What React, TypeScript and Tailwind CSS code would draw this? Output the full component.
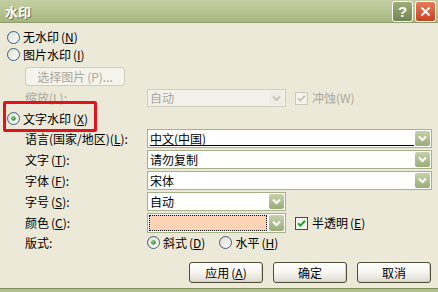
import React from "react";

// XP (olive) style "水印" dialog

function Acc({ t, k }: { t: string; k: string }) {
  return (
    <>
      {t}
      <span className="ml-[2px]">(</span>
      <span className="underline">{k}</span>)
    </>
  );
}

function Radio({ checked = false }: { checked?: boolean }) {
  return (
    <svg width="13" height="13" viewBox="0 0 13 13" className="shrink-0">
      <defs>
        <linearGradient id="rg" x1="0" y1="0" x2="1" y2="1">
          <stop offset="0" stopColor="#dcdbd2" />
          <stop offset="1" stopColor="#ffffff" />
        </linearGradient>
      </defs>
      <circle cx="6.5" cy="6.5" r="6" fill="url(#rg)" stroke="#3f5f86" strokeWidth="1" />
      {checked ? <circle cx="6.5" cy="6.5" r="2.3" fill="#3aa33a" /> : null}
      {checked ? <circle cx="6" cy="6" r="0.9" fill="#8fd48c" /> : null}
    </svg>
  );
}

function Check({ checked = false, disabled = false }: { checked?: boolean; disabled?: boolean }) {
  return (
    <svg width="13" height="13" viewBox="0 0 13 13" className="shrink-0">
      <rect
        x="0.5"
        y="0.5"
        width="12"
        height="12"
        fill={disabled ? "#f4f3ee" : "#f6f6f3"}
        stroke={disabled ? "#cac8bb" : "#2a5079"}
      />
      {checked ? (
        <path
          d="M3 6.2 L5.3 8.6 L10 3.8"
          fill="none"
          stroke={disabled ? "#cac8bb" : "#21a121"}
          strokeWidth="2"
        />
      ) : null}
    </svg>
  );
}

function DropBtn({ disabled = false }: { disabled?: boolean }) {
  return (
    <div
      className={
        disabled
          ? "m-[1px] flex w-[15px] shrink-0 items-center justify-center rounded-[2px] bg-[#eeede6]"
          : "m-[1px] flex w-[15px] shrink-0 items-center justify-center rounded-[2px] bg-gradient-to-b from-[#c7d1ab] to-[#9aab78]"
      }
    >
      <svg width="9" height="7" viewBox="0 0 9 7">
        <path
          d="M1 1.5 L4.5 5 L8 1.5"
          fill="none"
          stroke={disabled ? "#c9c7b9" : "#ffffff"}
          strokeWidth="2"
        />
      </svg>
    </div>
  );
}

function Combo({
  value,
  className = "",
  disabled = false,
  peach = false,
  doubleLine = false,
}: {
  value?: string;
  className?: string;
  disabled?: boolean;
  peach?: boolean;
  doubleLine?: boolean;
}) {
  return (
    <div
      className={
        "flex h-full border " +
        (disabled ? "border-[#cfcdbf] bg-[#f3f2ea] " : "border-[#a7b189] bg-white ") +
        className
      }
    >
      {peach ? (
        <div className="m-[1px] flex-1 border border-dotted border-black bg-[#fcd3b5]" />
      ) : (
        <div className="flex flex-1 items-center overflow-hidden pl-[2px]">
          {doubleLine ? (
            <div className="mt-[2px] w-full border-b border-black pb-[1px]">
              <div className="border-b border-black leading-[13px]">{value}</div>
            </div>
          ) : (
            <span className={disabled ? "text-[#aca899]" : "text-black"}>{value}</span>
          )}
        </div>
      )}
      <DropBtn disabled={disabled} />
    </div>
  );
}

function PushBtn({ children }: { children: React.ReactNode }) {
  return (
    <div className="flex h-full w-[74px] items-center justify-center rounded-[3px] border border-[#50503a] bg-gradient-to-b from-[#ffffff] via-[#f5f4ef] to-[#dedbcf] shadow-[inset_-1px_-1px_0_#d6d2c2]">
      {children}
    </div>
  );
}

function Row({
  label,
  children,
  className = "h-[19px]",
}: {
  label: React.ReactNode;
  children: React.ReactNode;
  className?: string;
}) {
  return (
    <div className={"flex items-center pl-[18px] " + className}>
      <div className="w-[122px] shrink-0">{label}</div>
      {children}
    </div>
  );
}

export default function App() {
  return (
    <div className="relative flex h-[292px] w-[438px] flex-col overflow-hidden bg-[#ece9d8] font-['Noto_Sans_CJK_SC','Noto_Sans',sans-serif] text-[12px] leading-none text-black">
      {/* title bar */}
      <div className="flex h-[23px] shrink-0 items-center border-b border-[#8d9c6a] bg-gradient-to-b from-[#c3cea2] via-[#b6c492] to-[#a6b681] pl-[5px] pr-[2px]">
        <span className="text-[13px] font-bold text-white [text-shadow:1px_1px_0_#6b7a4a]">水印</span>
        <div className="ml-auto flex gap-[2px]">
          <div className="flex h-[21px] w-[21px] items-center justify-center rounded-[3px] border border-white bg-gradient-to-b from-[#9fae7b] to-[#728552] font-['Liberation_Sans',sans-serif] text-[15px] font-bold text-white">
            ?
          </div>
          <div className="flex h-[21px] w-[21px] items-center justify-center rounded-[3px] border border-white bg-gradient-to-b from-[#e8795a] to-[#c9411f]">
            <svg width="11" height="11" viewBox="0 0 11 11">
              <path d="M1.5 1.5 L9.5 9.5 M9.5 1.5 L1.5 9.5" stroke="#ffffff" strokeWidth="2" />
            </svg>
          </div>
        </div>
      </div>

      {/* body */}
      <div className="flex flex-1 flex-col pl-[7px] pr-[6px] pt-[5px]">
        <div className="flex h-[18px] items-center gap-[3px]">
          <Radio />
          <span>
            <Acc t="无水印" k="N" />
          </span>
        </div>
        <div className="flex h-[17px] items-center gap-[3px]">
          <Radio />
          <span>
            <Acc t="图片水印" k="I" />
          </span>
        </div>
        <div className="mt-[4px] flex h-[19px] pl-[18px]">
          <div className="flex w-[100px] items-center justify-center rounded-[3px] border border-[#cfcdbf] bg-[#f4f3ec] text-[#aca899]">
            选择图片<span className="ml-[2px]">(P)...</span>
          </div>
        </div>
        <Row className="mt-[3px] h-[18px]" label={<span className="text-[#aca899]">缩放(L):</span>}>
          <Combo value="自动" disabled className="w-[139px]" />
          <div className="ml-[9px] flex items-center gap-[4px] text-[#aca899]">
            <Check checked disabled />
            <span>冲蚀(W)</span>
          </div>
        </Row>
        <div className="mt-[2px] flex h-[19px] items-center gap-[3px]">
          <Radio checked />
          <span>
            <Acc t="文字水印" k="X" />
          </span>
        </div>
        <Row
          className="mt-[1px] h-[19px]"
          label={
            <>
              语言(国家/地区)(<span className="underline">L</span>):
            </>
          }
        >
          <Combo value="中文(中国)" doubleLine className="flex-1" />
        </Row>
        <Row
          className="mt-[2px] h-[19px]"
          label={
            <>
              <Acc t="文字" k="T" />:
            </>
          }
        >
          <Combo value="请勿复制" className="flex-1" />
        </Row>
        <Row
          className="mt-[2px] h-[19px]"
          label={
            <>
              <Acc t="字体" k="F" />:
            </>
          }
        >
          <Combo value="宋体" className="flex-1" />
        </Row>
        <Row
          className="mt-[2px] h-[19px]"
          label={
            <>
              <Acc t="字号" k="S" />:
            </>
          }
        >
          <Combo value="自动" className="w-[139px]" />
        </Row>
        <Row
          className="mt-[2px] h-[20px]"
          label={
            <>
              <Acc t="颜色" k="C" />:
            </>
          }
        >
          <Combo peach className="w-[139px]" />
          <div className="ml-[9px] flex items-center gap-[4px]">
            <Check checked />
            <span>
              <Acc t="半透明" k="E" />
            </span>
          </div>
        </Row>
        <Row className="h-[19px]" label="版式:">
          <div className="flex items-center gap-[3px]">
            <Radio checked />
            <span>
              <Acc t="斜式" k="D" />
            </span>
          </div>
          <div className="ml-[14px] flex items-center gap-[3px]">
            <Radio />
            <span>
              <Acc t="水平" k="H" />
            </span>
          </div>
        </Row>
        <div className="mt-[10px] flex h-[21px] justify-end gap-[10px] pr-[1px]">
          <PushBtn>
            <Acc t="应用" k="A" />
          </PushBtn>
          <PushBtn>确定</PushBtn>
          <PushBtn>取消</PushBtn>
        </div>
      </div>

      {/* bottom frame */}
      <div className="h-[4px] shrink-0 border-t border-[#7f8f5e] bg-[#b2c08e]" />

      {/* red annotation box */}
      <div className="absolute left-[3px] top-[101px] h-[31px] w-[94px] rounded-[2px] border-[3px] border-[#e3131b]" />
    </div>
  );
}
